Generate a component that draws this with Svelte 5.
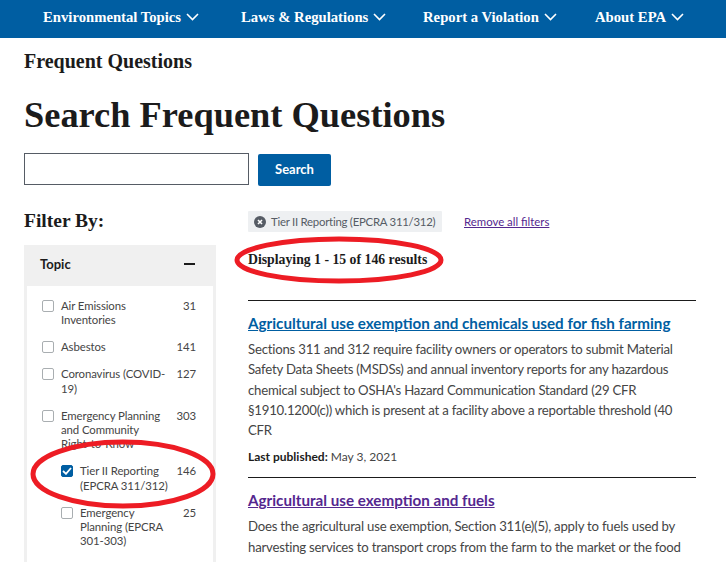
<script lang="ts">
	const navItems = ['Environmental Topics', 'Laws & Regulations', 'Report a Violation', 'About EPA'];

	const topics = [
		{ label: 'Air Emissions Inventories', count: 31 },
		{ label: 'Asbestos', count: 141 },
		{ label: 'Coronavirus (COVID-19)', count: 127 },
		{ label: 'Emergency Planning and Community Right-to-Know', count: 303 },
		{ label: 'Tier II Reporting (EPCRA 311/312)', count: 146, nested: true, checked: true },
		{ label: 'Emergency Planning (EPCRA 301-303)', count: 25, nested: true }
	];
</script>

<div class="page">
	<nav class="topnav">
		{#each navItems as item}
			<a class="navlink" href="#top">
				{item}
				<svg width="13" height="8" viewBox="0 0 13 8"><path d="M1 1l5.5 5.5L12 1" fill="none" stroke="#fff" stroke-width="1.6" /></svg>
			</a>
		{/each}
	</nav>

	<main class="content">
		<div class="crumb">Frequent Questions</div>
		<h1>Search Frequent Questions</h1>

		<form class="search">
			<input type="text" aria-label="Search" />
			<button type="button">Search</button>
		</form>

		<div class="columns">
			<aside class="sidebar">
				<h2>Filter By:</h2>
				<div class="panel">
					<div class="panel-head">
						<span>Topic</span>
						<span class="minus"></span>
					</div>
					<ul class="topics">
						{#each topics as t}
							<li class:nested={t.nested}>
								<span class="box" class:checked={t.checked}>
									{#if t.checked}
										<svg width="10" height="8" viewBox="0 0 10 8"><path d="M1 4l3 2.8L9 1" fill="none" stroke="#fff" stroke-width="1.8" /></svg>
									{/if}
								</span>
								<span class="label">{t.label}</span>
								<span class="count">{t.count}</span>
							</li>
						{/each}
					</ul>
				</div>
			</aside>

			<section class="results">
				<div class="filters">
					<span class="chip">
						<svg width="12" height="12" viewBox="0 0 12 12">
							<circle cx="6" cy="6" r="6" fill="#565c65" />
							<path d="M4 4l4 4M8 4l-4 4" stroke="#fff" stroke-width="1.6" />
						</svg>
						Tier II Reporting (EPCRA 311/312)
					</span>
					<a class="clear" href="#top">Remove all filters</a>
				</div>
				<p class="total">Displaying 1 - 15 of 146 results</p>

				<article>
					<h3><a class="blue" href="#top">Agricultural use exemption and chemicals used for fish farming</a></h3>
					<p class="body">Sections 311 and 312 require facility owners or operators to submit Material<br />Safety Data Sheets (MSDSs) and annual inventory reports for any hazardous<br />chemical subject to OSHA's Hazard Communication Standard (29 CFR<br />§1910.1200(c)) which is present at a facility above a reportable threshold (40<br />CFR</p>
					<p class="date"><b>Last published:</b> May 3, 2021</p>
				</article>
				<article>
					<h3><a class="purple" href="#top">Agricultural use exemption and fuels</a></h3>
					<p class="body">Does the agricultural use exemption, Section 311(e)(5), apply to fuels used by<br />harvesting services to transport crops from the farm to the market or the food</p>
				</article>
			</section>
		</div>
	</main>

	<!-- hand-drawn annotations on top of the page -->
	<svg class="marks" width="726" height="562" viewBox="0 0 726 562">
		<ellipse cx="339" cy="260" rx="102" ry="21" />
		<ellipse cx="123" cy="474" rx="90" ry="32" />
	</svg>
</div>

<style>
	:global(body) {
		margin: 0;
		background: #fff;
	}

	.page {
		position: relative;
		height: 562px;
		overflow: hidden;
		font-family: 'Lato', 'Open Sans', sans-serif;
		color: #1b1b1b;
	}

	.topnav {
		height: 38px;
		background: #005ea2;
		display: grid;
		grid-template-columns: 198px 182px 172px auto;
		align-items: center;
		padding: 0 0 4px 43px;
		box-sizing: border-box;
	}

	.navlink {
		font-family: 'Liberation Serif', serif;
		font-weight: bold;
		font-size: 14.7px;
		color: #fff;
		text-decoration: none;
		display: flex;
		align-items: center;
		gap: 5px;
	}

	.content {
		padding: 0 30px 0 24px;
	}

	.crumb {
		font-family: 'Liberation Serif', serif;
		font-weight: bold;
		font-size: 20px;
		line-height: 24px;
		margin-top: 11px;
	}

	h1 {
		font-family: 'Liberation Serif', serif;
		font-weight: bold;
		font-size: 36.4px;
		line-height: 40px;
		margin: 22px 0 0;
	}

	.search {
		display: flex;
		gap: 9px;
		margin-top: 18px;
	}

	.search input {
		width: 225px;
		height: 32px;
		box-sizing: border-box;
		border: 1px solid #565c65;
		padding: 0;
		margin: 0;
	}

	.search button {
		width: 73px;
		height: 32px;
		margin-top: 1px;
		padding: 0 0 2px;
		background: #005ea2;
		border: 0;
		border-radius: 2px;
		color: #fff;
		font-family: inherit;
		font-weight: bold;
		font-size: 13px;
	}

	.columns {
		display: grid;
		grid-template-columns: 192px 448px;
		gap: 32px;
		margin-top: 23px;
	}

	h2 {
		font-family: 'Liberation Serif', serif;
		font-weight: bold;
		font-size: 19.5px;
		line-height: 24px;
		margin: 0 0 12px;
	}

	.panel {
		background: #f0f0f0;
		padding: 0 3px;
		height: 400px;
	}

	.panel-head {
		height: 41px;
		display: flex;
		align-items: center;
		justify-content: space-between;
		padding: 0 18px 4px 13px;
		box-sizing: border-box;
		font-weight: bold;
		font-size: 13px;
	}

	.minus {
		width: 11px;
		height: 2px;
		background: #1b1b1b;
	}

	.topics {
		list-style: none;
		margin: 0;
		padding: 13px 17px 0 15px;
		background: #fff;
		height: 100%;
		font-size: 11.4px;
		line-height: 14.4px;
		letter-spacing: -0.1px;
		color: #454545;
	}

	.topics li {
		display: flex;
		margin-bottom: 12.5px;
	}

	.topics li.nested {
		padding-left: 19px;
	}

	.box {
		flex: none;
		width: 10px;
		height: 10px;
		margin: 1px 7px 0 0;
		border: 1px solid #a9aeb1;
		border-radius: 2px;
		background: #fff;
		display: flex;
		align-items: center;
		justify-content: center;
	}

	.box.checked {
		background: #005ea2;
		border-color: #005ea2;
	}

	.label {
		flex: 1;
		padding-right: 6px;
	}

	.count {
		flex: none;
	}

	.filters {
		display: flex;
		align-items: center;
		gap: 22px;
		margin-top: 2px;
		font-size: 11.4px;
	}

	.chip {
		height: 21px;
		width: 194px;
		box-sizing: border-box;
		padding: 0 6px;
		background: #eef0f2;
		color: #565c65;
		display: flex;
		align-items: center;
		gap: 5px;
		border-radius: 1px;
		white-space: nowrap;
		letter-spacing: -0.25px;
	}

	.clear {
		color: #54278f;
	}

	.total {
		font-family: 'Liberation Serif', serif;
		font-weight: bold;
		font-size: 13.75px;
		line-height: 16px;
		margin: 20px 0 0;
		padding-bottom: 32px;
		border-bottom: 1px solid #1b1b1b;
	}

	article {
		border-bottom: 1px solid #1b1b1b;
		padding: 12px 0 12px;
	}

	h3 {
		margin: 0;
		font-size: 15.2px;
		line-height: 20px;
		font-weight: bold;
	}

	.blue {
		color: #005ea2;
	}

	.purple {
		color: #54278f;
	}

	.body {
		margin: 6px 0 0;
		font-size: 13.2px;
		line-height: 20.3px;
		letter-spacing: -0.22px;
		color: #454545;
		white-space: nowrap;
	}

	.date {
		margin: 9px 0 0;
		font-size: 12px;
		line-height: 16px;
		color: #454545;
	}

	.date b {
		color: #1b1b1b;
	}

	.marks {
		position: absolute;
		left: 0;
		top: 0;
		pointer-events: none;
	}

	.marks ellipse {
		fill: none;
		stroke: #ed1c24;
		stroke-width: 5;
	}
</style>
